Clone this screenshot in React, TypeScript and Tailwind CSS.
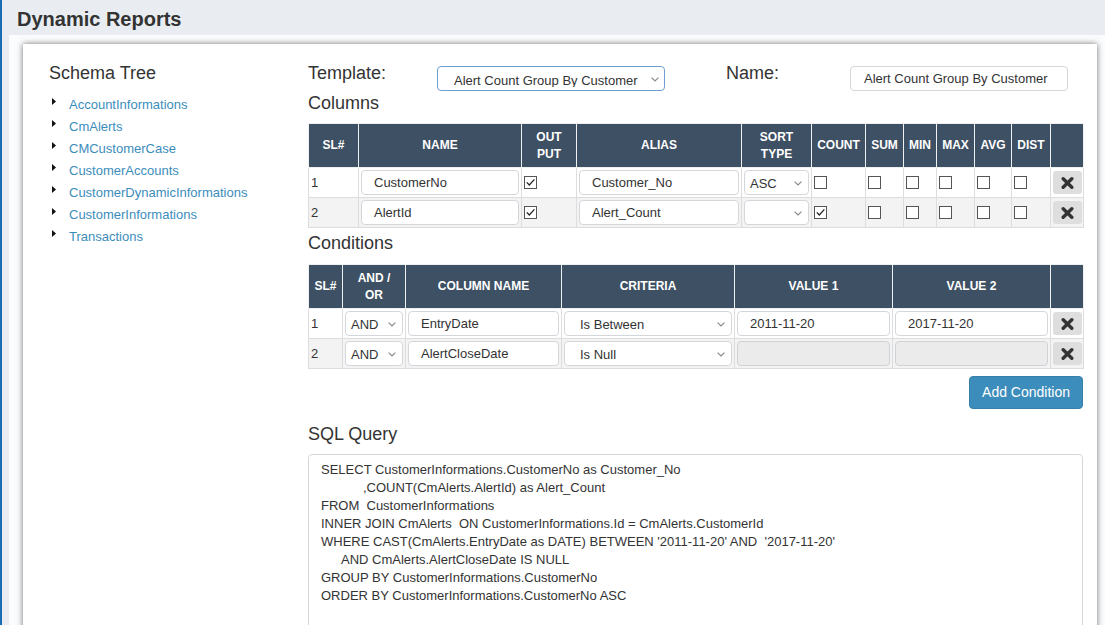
import React from "react";

const Chevron = () => (
  <svg width="8" height="5" viewBox="0 0 8 5" className="shrink-0">
    <path d="M0.6 0.6 L4 4 L7.4 0.6" fill="none" stroke="#8a8a8a" strokeWidth="1.2" />
  </svg>
);

const Check = ({ checked }: { checked: boolean }) => (
  <span className="flex h-[13px] w-[13px] items-center justify-center border border-[#555] bg-white">
    {checked && (
      <svg width="11" height="11" viewBox="0 0 11 11">
        <path d="M1.8 5.4 L4.3 8 L9.4 2.4" fill="none" stroke="#222" strokeWidth="1.3" />
      </svg>
    )}
  </span>
);

const XBtn = () => (
  <div className="mx-auto flex h-[23px] w-[29px] items-center justify-center rounded-[3px] bg-[#dedede]">
    <svg width="13" height="12" viewBox="0 0 13 12">
      <path d="M2.2 1.8 L10.8 10.2 M10.8 1.8 L2.2 10.2" stroke="#333" strokeWidth="3.4" strokeLinecap="round" />
    </svg>
  </div>
);

const TextBox = ({ value, disabled }: { value: string; disabled?: boolean }) => (
  <div
    className={
      disabled
        ? "flex h-[25px] items-center rounded-[4px] border border-[#cfd3d8] bg-[#ebebeb] pl-[12px]"
        : "flex h-[25px] items-center rounded-[4px] border border-[#d3d7dc] bg-white pl-[12px]"
    }
  >
    {value}
  </div>
);

const SelectBox = ({ value, wide }: { value: string; wide?: boolean }) => (
  <div
    className={
      wide
        ? "flex h-[25px] items-center justify-between rounded-[4px] border border-[#d3d7dc] bg-white pl-[15px] pr-[6px] pt-[2px]"
        : "flex h-[25px] items-center justify-between rounded-[4px] border border-[#d3d7dc] bg-white pl-[5px] pr-[6px] pt-[2px]"
    }
  >
    <span>{value}</span>
    <Chevron />
  </div>
);

const tables = [
  "AccountInformations",
  "CmAlerts",
  "CMCustomerCase",
  "CustomerAccounts",
  "CustomerDynamicInformations",
  "CustomerInformations",
  "Transactions",
];

const th = "h-[44px] border border-[#eef0f2] bg-[#3e5063] p-0 text-center align-middle text-[12px] font-bold leading-[17px] text-white";
const td = "border border-[#dddddd] p-[2px] align-middle";

const colCols = [
  "w-[50px]",
  "w-[163px]",
  "w-[55px]",
  "w-[165px]",
  "w-[70px]",
  "w-[54px]",
  "w-[38px]",
  "w-[33px]",
  "w-[38px]",
  "w-[37px]",
  "w-[39px]",
  "w-[33px]",
];

const condCols = ["w-[34px]", "w-[63px]", "w-[156px]", "w-[173px]", "w-[158px]", "w-[158px]", "w-[33px]"];

const columnRows = [
  { sl: "1", name: "CustomerNo", output: true, alias: "Customer_No", sort: "ASC", checks: [false, false, false, false, false, false], bg: "bg-white" },
  { sl: "2", name: "AlertId", output: true, alias: "Alert_Count", sort: "", checks: [true, false, false, false, false, false], bg: "bg-[#f3f3f3]" },
];

const condRows = [
  { sl: "1", op: "AND", col: "EntryDate", crit: "Is Between", v1: "2011-11-20", v2: "2017-11-20", disabled: false, bg: "bg-white" },
  { sl: "2", op: "AND", col: "AlertCloseDate", crit: "Is Null", v1: "", v2: "", disabled: true, bg: "bg-[#f3f3f3]" },
];

const sqlLines: { text: string; indent: string }[] = [
  { text: "SELECT CustomerInformations.CustomerNo as Customer_No", indent: "" },
  { text: ",COUNT(CmAlerts.AlertId) as Alert_Count", indent: "pl-[42px]" },
  { text: "FROM  CustomerInformations", indent: "" },
  { text: "INNER JOIN CmAlerts  ON CustomerInformations.Id = CmAlerts.CustomerId", indent: "" },
  { text: "WHERE CAST(CmAlerts.EntryDate as DATE) BETWEEN '2011-11-20' AND  '2017-11-20'", indent: "" },
  { text: "AND CmAlerts.AlertCloseDate IS NULL", indent: "pl-[20px]" },
  { text: "GROUP BY CustomerInformations.CustomerNo", indent: "" },
  { text: "ORDER BY CustomerInformations.CustomerNo ASC", indent: "" },
];

export default function App() {
  return (
    <div className="min-h-screen border-l-2 border-[#1b6db3] bg-[#e9edf2] font-['Liberation_Sans',Arial,sans-serif] text-[#333]">
      <div className="h-[35px] pl-[15px] pt-[7px] text-[20px] font-bold leading-[24px] text-[#333]">Dynamic Reports</div>
      <div className="ml-[7px] bg-[#fbfcfd] pl-[14px] pr-[8px] pt-[9px]">
        <div className="flex bg-white pb-[20px] pl-[26px] pr-[14px] pt-[19px] shadow-[0_0_6px_rgba(0,0,0,0.55)]">
          {/* Left: schema tree */}
          <div className="w-[259px] shrink-0">
            <div className="mb-[11px] text-[18px] leading-[20px]">Schema Tree</div>
            {tables.map((t) => (
              <div key={t} className="flex h-[22px] items-start">
                <svg width="4" height="7" viewBox="0 0 4 7" className="ml-[3px] mt-[4px] shrink-0">
                  <polygon points="0,0 4,3.5 0,7" fill="#111" />
                </svg>
                <span className="ml-[13px] text-[13px] leading-[22px] text-[#3c8dbc]">{t}</span>
              </div>
            ))}
          </div>

          {/* Right */}
          <div className="w-[775px] shrink-0 text-[13px]">
            <div className="flex h-[28px] items-start">
              <div className="w-[129px] text-[18px] leading-[20px]">Template:</div>
              <div className="mt-[3px] flex h-[25px] w-[228px] items-start justify-between rounded-[4px] border border-[#6f9fd0] bg-white pl-[16px] pr-[5px] pt-[6px]">
                <span className="block h-[14px] overflow-hidden leading-[15px]">Alert Count Group By Customer</span>
                <span className="mt-[4px]">
                  <Chevron />
                </span>
              </div>
              <div className="ml-[61px] w-[124px] text-[18px] leading-[20px]">Name:</div>
              <div className="mt-[3px] flex h-[25px] w-[218px] items-center rounded-[4px] border border-[#d3d7dc] bg-white pl-[13px]">
                Alert Count Group By Customer
              </div>
            </div>

            <div className="mb-[10px] mt-[2px] text-[18px] leading-[20px]">Columns</div>
            <table className="w-[775px] table-fixed border-collapse">
              <colgroup>
                {colCols.map((c, i) => (
                  <col key={i} className={c} />
                ))}
              </colgroup>
              <thead>
                <tr>
                  <th className={th}>SL#</th>
                  <th className={th}>NAME</th>
                  <th className={th}>
                    OUT
                    <br />
                    PUT
                  </th>
                  <th className={th}>ALIAS</th>
                  <th className={th}>
                    SORT
                    <br />
                    TYPE
                  </th>
                  <th className={th}>COUNT</th>
                  <th className={th}>SUM</th>
                  <th className={th}>MIN</th>
                  <th className={th}>MAX</th>
                  <th className={th}>AVG</th>
                  <th className={th}>DIST</th>
                  <th className={th}></th>
                </tr>
              </thead>
              <tbody>
                {columnRows.map((r) => (
                  <tr key={r.sl} className={r.bg}>
                    <td className={td}>{r.sl}</td>
                    <td className={td}>
                      <TextBox value={r.name} />
                    </td>
                    <td className={td}>
                      <Check checked={r.output} />
                    </td>
                    <td className={td}>
                      <TextBox value={r.alias} />
                    </td>
                    <td className={td}>
                      <SelectBox value={r.sort} />
                    </td>
                    {r.checks.map((c, i) => (
                      <td key={i} className={td}>
                        <Check checked={c} />
                      </td>
                    ))}
                    <td className={td}>
                      <XBtn />
                    </td>
                  </tr>
                ))}
              </tbody>
            </table>

            <div className="mb-[11px] mt-[5px] text-[18px] leading-[20px]">Conditions</div>
            <table className="w-[775px] table-fixed border-collapse">
              <colgroup>
                {condCols.map((c, i) => (
                  <col key={i} className={c} />
                ))}
              </colgroup>
              <thead>
                <tr>
                  <th className={th}>SL#</th>
                  <th className={th}>
                    AND /
                    <br />
                    OR
                  </th>
                  <th className={th}>COLUMN NAME</th>
                  <th className={th}>CRITERIA</th>
                  <th className={th}>VALUE 1</th>
                  <th className={th}>VALUE 2</th>
                  <th className={th}></th>
                </tr>
              </thead>
              <tbody>
                {condRows.map((r) => (
                  <tr key={r.sl} className={r.bg}>
                    <td className={td}>{r.sl}</td>
                    <td className={td}>
                      <SelectBox value={r.op} />
                    </td>
                    <td className={td}>
                      <TextBox value={r.col} />
                    </td>
                    <td className={td}>
                      <SelectBox value={r.crit} wide />
                    </td>
                    <td className={td}>
                      <TextBox value={r.v1} disabled={r.disabled} />
                    </td>
                    <td className={td}>
                      <TextBox value={r.v2} disabled={r.disabled} />
                    </td>
                    <td className={td}>
                      <XBtn />
                    </td>
                  </tr>
                ))}
              </tbody>
            </table>

            <div className="mt-[7px] flex justify-end">
              <button className="h-[33px] rounded-[4px] border border-[#367fa9] bg-[#3c8dbc] px-[12px] text-[14px] text-white">
                Add Condition
              </button>
            </div>

            <div className="mb-[10px] mt-[15px] text-[18px] leading-[20px]">SQL Query</div>
            <div className="h-[200px] rounded-[4px] border border-[#d3d7dc] bg-white pl-[12px] pt-[6px] text-[13px] leading-[18px] text-[#333]">
              {sqlLines.map((l, i) => (
                <div key={i} className={"whitespace-pre " + l.indent}>
                  {l.text}
                </div>
              ))}
            </div>
          </div>
        </div>
      </div>
    </div>
  );
}
